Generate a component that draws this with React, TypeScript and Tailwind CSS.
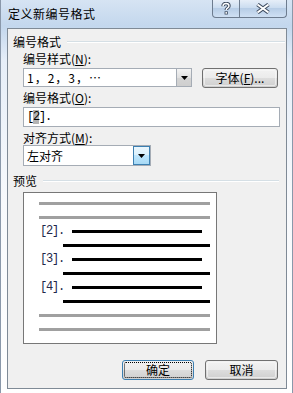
import React from "react";

const cjk = "font-['Noto_Sans_CJK_SC','Noto_Sans',sans-serif]";
const mono = "font-['Liberation_Mono','Noto_Sans_CJK_SC',monospace]";

function DropArrow() {
  return (
    <svg width="7" height="4" viewBox="0 0 7 4">
      <path d="M0 0H7L3.5 4Z" fill="#000" />
    </svg>
  );
}

function GroupHeader({ label, gap }: { label: string; gap: string }) {
  return (
    <div className="flex items-center h-[14px] ml-[5px] mr-[1px]">
      <span className="text-[12px] leading-[14px] text-black">{label}</span>
      <div className={`flex-1 h-[2px] border-t border-[#d5dfe5] border-b border-b-white ${gap}`} />
    </div>
  );
}

function Label({ text, hot }: { text: string; hot: string }) {
  return (
    <div className="ml-[15px] h-[14px] text-[12px] leading-[14px] text-black">
      {text}(<span className="underline underline-offset-1">{hot}</span>):
    </div>
  );
}

function WinButton({ children, focus, w }: { children: React.ReactNode; focus?: boolean; w: string }) {
  return (
    <div
      className={`${w} h-[20px] rounded-[3px] border ${
        focus ? "border-[#3c7fb1]" : "border-[#707070]"
      } bg-[linear-gradient(#f2f2f2_0%,#ebebeb_50%,#dddddd_50%,#cfcfcf_100%)] p-[1px]`}
    >
      <div
        className={`h-full w-full rounded-[2px] flex items-center justify-center text-[12px] leading-none text-black ${
          focus ? "border border-dotted border-black" : "border border-[#f8f8f8]/60"
        }`}
      >
        {children}
      </div>
    </div>
  );
}

function Bar({ ml, w, gray }: { ml: string; w: string; gray?: boolean }) {
  return <div className={`h-[3px] ${ml} ${w} ${gray ? "bg-[#a0a0a0]" : "bg-black"}`} />;
}

function NumRow({ n }: { n: number }) {
  return (
    <div className="h-[3px] flex items-center pl-[16px]">
      <span className={`${mono} w-[32px] text-[12px] tracking-[-1.2px] leading-none text-[#22264a] -mt-[2px]`}>
        [{n}].
      </span>
      <div className="h-[3px] w-[130px] bg-black" />
    </div>
  );
}

export default function App() {
  return (
    <div className={`${cjk} w-[293px] h-[393px] overflow-hidden bg-[linear-gradient(#d6e4f3_0px,#c3d7ed_26px,#e6eef8_60px,#f7f9fc_200px,#ffffff_393px)] border-x border-[#8a98aa]`}>
      {/* title bar */}
      <div className="h-[28px] flex items-start justify-between pl-[7px] pr-[5px]">
        <div className="mt-[7px] text-[12px] leading-[14px] text-black tracking-[0.5px]">定义新编号格式</div>
        <div className="flex h-[18px] border border-t-0 border-[#6d7c8f] rounded-b-[4px] overflow-hidden bg-[linear-gradient(#e6eef8,#c9dbef_50%,#b7cde6_50%,#cfe0f3)]">
          <div className="w-[27px] flex items-center justify-center border-r border-[#6d7c8f]">
            <svg width="10" height="13" viewBox="0 0 10 13">
              <path d="M2 4.2C2 2.2 3.5 1.5 5 1.5S8 2.3 8 4C8 5.8 5.2 5.9 5.2 8" fill="none" stroke="#3e4c60" strokeWidth="3.4" />
              <path d="M2 4.2C2 2.2 3.5 1.5 5 1.5S8 2.3 8 4C8 5.8 5.2 5.9 5.2 8" fill="none" stroke="#fff" strokeWidth="1.4" />
              <rect x="3.6" y="9.3" width="3.2" height="3.2" fill="#3e4c60" />
              <rect x="4.4" y="10.1" width="1.6" height="1.6" fill="#fff" />
            </svg>
          </div>
          <div className="w-[46px] flex items-center justify-center">
            <svg width="16" height="11" viewBox="0 0 16 11">
              <path d="M2.5 1.5L13.5 9.5M13.5 1.5L2.5 9.5" stroke="#3e4c60" strokeWidth="4" />
              <path d="M2.5 1.5L13.5 9.5M13.5 1.5L2.5 9.5" stroke="#fff" strokeWidth="2" />
            </svg>
          </div>
        </div>
      </div>

      {/* client area */}
      <div className="ml-[6px] w-[280px] h-[361px] border border-[#7f8a96] bg-[#f0f0f0] text-black">
        <div className="h-[6px]" />
        <GroupHeader label="编号格式" gap="ml-[6px]" />
        <div className="h-[3px]" />
        <Label text="编号样式" hot="N" />
        <div className="mt-[2px] ml-[15px] flex h-[19px]">
          <div className="w-[169px] h-full border border-[#a5acb5] bg-white flex items-center">
            <span className="pl-[3px] flex-1 text-[12px] leading-none tracking-[1px]">1，2，3，…</span>
            <div className="w-[15px] h-full border-l border-[#a5acb5] bg-[linear-gradient(#f4f4f4,#e1e1e1_50%,#d4d4d4_50%,#cfcfcf)] flex items-center justify-center">
              <DropArrow />
            </div>
          </div>
          <div className="ml-[10px]">
            <WinButton w="w-[76px]">
              字体(<span className="underline">F</span>)...
            </WinButton>
          </div>
        </div>
        <div className="h-[4px]" />
        <Label text="编号格式" hot="O" />
        <div className="mt-[2px] ml-[15px] w-[257px] h-[20px] border border-[#a5acb5] bg-white flex items-center pl-[3px]">
          <span className={`${mono} text-[12px] tracking-[-1.2px] leading-none text-black`}>
            [<span className="bg-[#b4b4b4]">2</span>].
          </span>
        </div>
        <div className="h-[4px]" />
        <Label text="对齐方式" hot="M" />
        <div className="ml-[15px] w-[128px] h-[21px] border border-[#a5acb5] bg-white flex items-center">
          <span className="pl-[3px] flex-1 text-[12px] leading-none">左对齐</span>
          <div className="w-[17px] h-full border border-[#3c7fb1] bg-[linear-gradient(#eaf6fd,#d9f0fc_50%,#bee6fd_50%,#a7d9f5)] flex items-center justify-center">
            <DropArrow />
          </div>
        </div>
        <div className="h-[8px]" />
        <GroupHeader label="预览" gap="ml-[6px] mr-[6px]" />

        {/* preview */}
        <div className="mt-[4px] ml-[15px] w-[194px] h-[152px] border border-[#777777] bg-white pt-[9px] flex flex-col gap-[11px]">
          <Bar ml="ml-[15px]" w="w-[171px]" gray />
          <Bar ml="ml-[15px]" w="w-[171px]" gray />
          <NumRow n={2} />
          <Bar ml="ml-[39px]" w="w-[147px]" />
          <NumRow n={3} />
          <Bar ml="ml-[39px]" w="w-[147px]" />
          <NumRow n={4} />
          <Bar ml="ml-[39px]" w="w-[147px]" />
          <Bar ml="ml-[15px]" w="w-[171px]" gray />
          <Bar ml="ml-[15px]" w="w-[171px]" gray />
        </div>

        <div className="mt-[16px] flex justify-end gap-[11px] pr-[8px]">
          <WinButton w="w-[72px]" focus>
            确定
          </WinButton>
          <WinButton w="w-[73px]">取消</WinButton>
        </div>
      </div>
    </div>
  );
}
